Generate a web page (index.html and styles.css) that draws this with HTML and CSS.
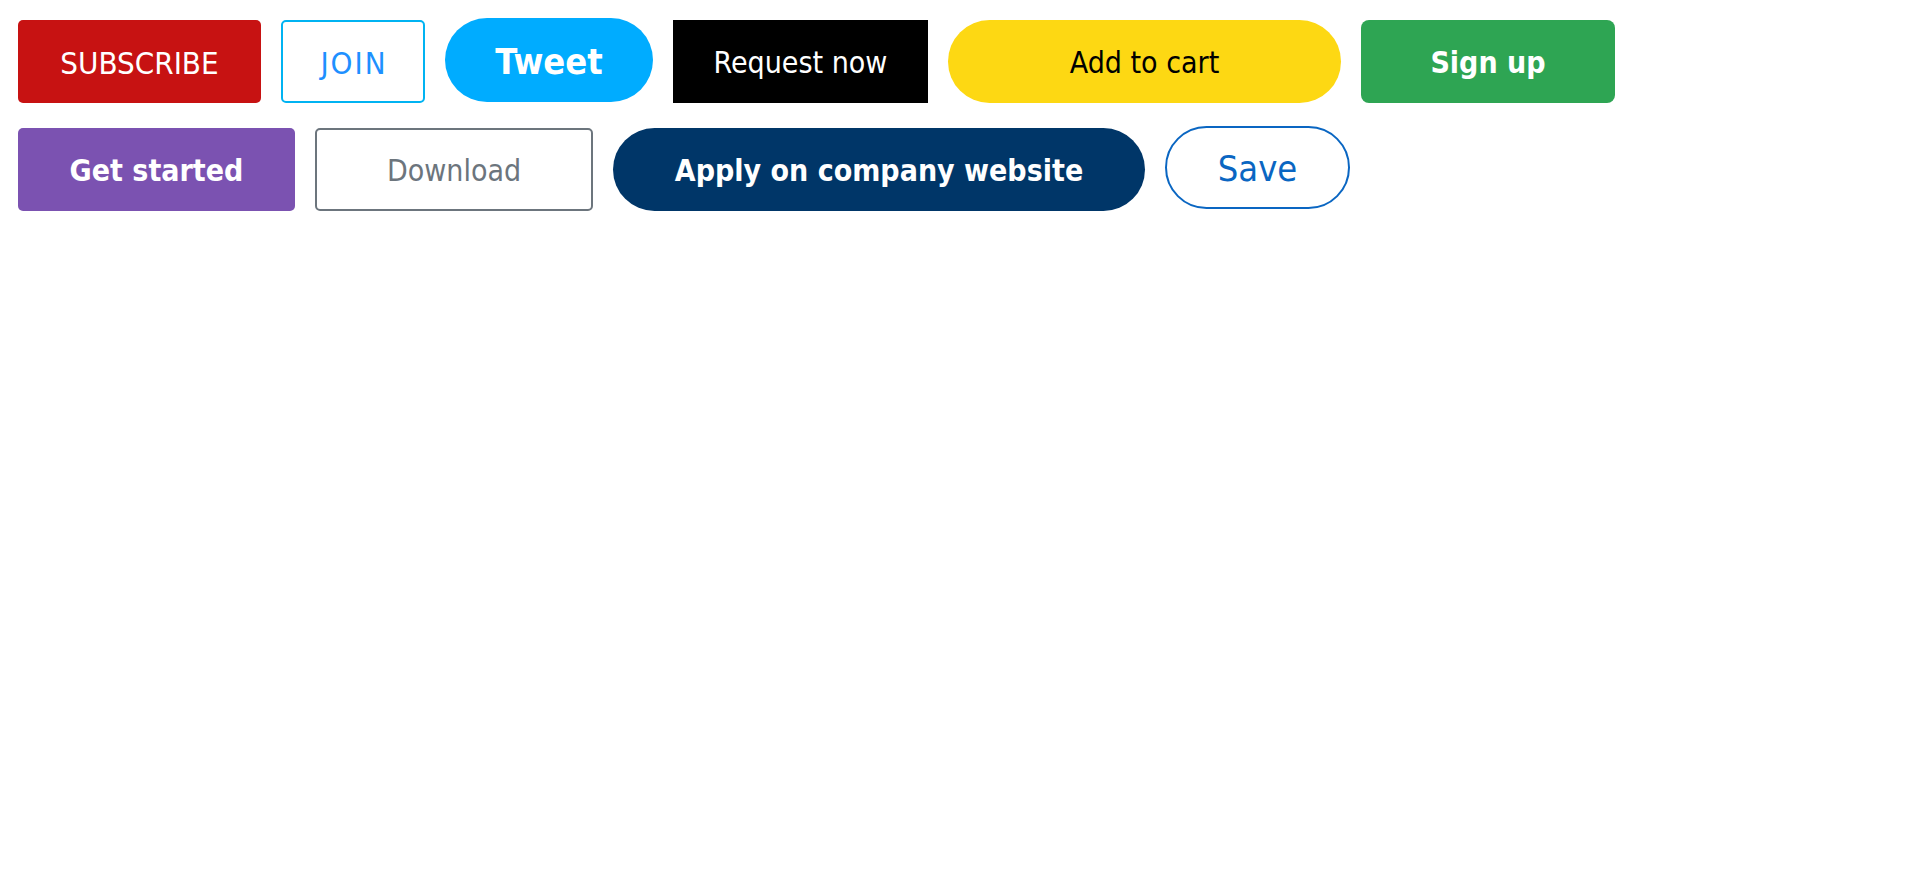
FILE: index.html
```html
<!DOCTYPE html>
<html lang="en">
<head>
<meta charset="utf-8">
<title>Buttons</title>
<link rel="stylesheet" href="styles.css">
</head>
<body>
<main class="board">
  <div class="row">
    <a class="btn btn-subscribe" href="#">SUBSCRIBE</a>
    <a class="btn btn-join" href="#">JOIN</a>
    <a class="btn btn-tweet" href="#">Tweet</a>
    <a class="btn btn-request" href="#">Request now</a>
    <a class="btn btn-cart" href="#">Add to cart</a>
    <a class="btn btn-signup" href="#">Sign up</a>
  </div>
  <div class="row">
    <a class="btn btn-started" href="#">Get started</a>
    <a class="btn btn-download" href="#">Download</a>
    <a class="btn btn-apply" href="#">Apply on company website</a>
    <a class="btn btn-save" href="#">Save</a>
  </div>
</main>
</body>
</html>
```

FILE: styles.css
```css
html, body {
  margin: 0;
  padding: 0;
  background: #ffffff;
}

.board {
  display: flex;
  flex-direction: column;
  gap: 25px;
  padding: 20px 18px;
}

.row {
  display: flex;
  align-items: flex-start;
  gap: 20px;
}

.btn {
  box-sizing: border-box;
  display: flex;
  align-items: center;
  justify-content: center;
  height: 83px;
  padding-top: 2px;
  flex: none;
  font-family: "DejaVu Sans Condensed", "DejaVu Sans", sans-serif;
  font-stretch: condensed;
  font-size: 30px;
  font-weight: normal;
  text-decoration: none;
  white-space: nowrap;
}

.btn-subscribe {
  width: 243px;
  background: #c71212;
  color: #ffffff;
  border-radius: 5px;
  font-size: 31px;
}

.btn-join {
  width: 144px;
  background: #ffffff;
  color: #1e90ff;
  border: 2px solid #00b3f2;
  border-radius: 5px;
  font-size: 31px;
  letter-spacing: 2px;
  text-indent: 2px;
}

.btn-tweet {
  width: 208px;
  height: 84px;
  margin-top: -2px;
  background: #00acff;
  color: #ffffff;
  font-weight: bold;
  font-size: 36px;
  border-radius: 42px;
}

.btn-request {
  width: 255px;
  background: #000000;
  color: #ffffff;
}

.btn-cart {
  width: 393px;
  background: #fdd813;
  color: #000000;
  border-radius: 42px;
}

.btn-signup {
  width: 254px;
  background: #2ea553;
  color: #ffffff;
  font-weight: bold;
  border-radius: 8px;
}

.btn-started {
  width: 277px;
  background: #7b52b1;
  color: #ffffff;
  font-weight: bold;
  border-radius: 5px;
}

.btn-download {
  width: 278px;
  background: #ffffff;
  color: #6c757d;
  border: 2px solid #6c757d;
  border-radius: 5px;
}

.btn-apply {
  width: 532px;
  background: #003668;
  color: #ffffff;
  font-weight: bold;
  border-radius: 42px;
}

.btn-save {
  width: 185px;
  margin-top: -2px;
  background: #ffffff;
  color: #0a66c2;
  border: 2px solid #0a66c2;
  border-radius: 42px;
  font-size: 36px;
}
```
